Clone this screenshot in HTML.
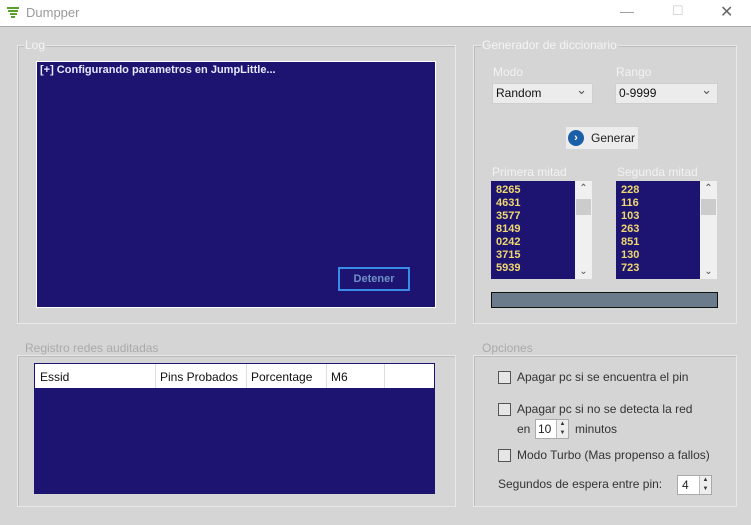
<!DOCTYPE html>
<html><head><style>
body{margin:0;width:751px;height:525px;background:#d5d5d5;font-family:"Liberation Sans",sans-serif;font-size:12px;color:#222;position:relative;overflow:hidden}
.a{position:absolute}
.gb{position:absolute;border:1px solid #e8e8e8;box-shadow:inset 1px 1px 0 #bcbcbc}
.lbl{position:absolute;background:#d5d5d5;color:#f4f4f4;padding:0 1px;font-size:12px}
.navy{background:#1c1470}
.combo{position:absolute;background:#ececec;border:1px solid #cfcfcf;height:19px;line-height:19px;padding-left:3px;font-size:12px;color:#111}
.combo:after{content:"⌄";position:absolute;right:5px;top:-4px;font-size:13px;color:#555}
.lb{position:absolute;background:#1c1470;color:#f0d870;font-weight:bold;font-size:11px;line-height:13px;padding:3px 0 0 5px;box-sizing:border-box}
.sb{position:absolute;background:#f0f0f0;width:17px;color:#555;font-size:10px;text-align:center}
.cb{position:absolute;width:11px;height:11px;border:1px solid #555;background:#e6e6e6}
.ot{position:absolute;color:#333;font-size:12px}
.spin{position:absolute;background:#fff;border:1px solid #aaa;height:18px;font-size:12px;line-height:18px}
.arr{position:absolute;right:0;top:0;width:11px;height:18px;background:#eee;border-left:1px solid #bbb;font-size:6px;line-height:9px;text-align:center;color:#333}
</style></head><body>
<div class="a" style="left:0;top:0;width:751px;height:26px;background:#fff;border-bottom:1px solid #aaa"></div>
<svg class="a" style="left:5px;top:5px" width="16" height="16" viewBox="0 0 16 16"><g stroke="#5aa02c" stroke-width="2" fill="none"><path d="M2 3h12M3 6h10M5 9h7M6 12h4"/></g></svg>
<div class="a" style="left:26px;top:5px;color:#999;font-size:13px">Dumpper</div>
<div class="a" style="left:620px;top:3px;color:#999;font-size:14px">—</div>
<div class="a" style="left:672px;top:3px;color:#ccc;font-size:13px">☐</div>
<div class="a" style="left:720px;top:2px;color:#666;font-size:16px">✕</div>

<div class="gb" style="left:17px;top:45px;width:437px;height:277px"></div>
<div class="lbl" style="left:24px;top:38px">Log</div>
<div class="a navy" style="left:36px;top:61px;width:398px;height:245px;border:1px solid #fff"></div>
<div class="a" style="left:40px;top:64px;color:#e8e8ff;font-weight:bold;font-size:11px">[+] Configurando parametros en JumpLittle...</div>
<div class="a" style="left:338px;top:267px;width:68px;height:20px;border:2px solid #3a8ae8;color:#7090c8;font-size:11px;text-align:center;line-height:20px;font-weight:bold">Detener</div>

<div class="gb" style="left:473px;top:45px;width:262px;height:277px"></div>
<div class="lbl" style="left:481px;top:38px">Generador de diccionario</div>
<div class="ot" style="left:493px;top:65px;color:#f2f2f2">Modo</div>
<div class="ot" style="left:616px;top:65px;color:#f2f2f2">Rango</div>
<div class="combo" style="left:492px;top:83px;width:96px">Random</div>
<div class="combo" style="left:615px;top:83px;width:98px">0-9999</div>
<div class="a" style="left:566px;top:127px;width:72px;height:22px;background:#ececec"></div>
<div class="a" style="left:568px;top:130px;width:16px;height:16px;border-radius:50%;background:#1a5fa8;color:#fff;font-size:11px;text-align:center;line-height:16px;font-weight:bold">›</div>
<div class="a" style="left:591px;top:131px;font-size:12px">Generar</div>
<div class="ot" style="left:492px;top:165px;color:#f2f2f2">Primera mitad</div>
<div class="ot" style="left:617px;top:165px;color:#f2f2f2">Segunda mitad</div>
<div class="lb" style="left:491px;top:181px;width:85px;height:98px">8265<br>4631<br>3577<br>8149<br>0242<br>3715<br>5939</div>
<div class="sb" style="left:575px;top:181px;height:98px"><div style="position:absolute;top:2px;width:17px">⌃</div><div style="position:absolute;left:1px;top:18px;width:15px;height:16px;background:#ccc"></div><div style="position:absolute;bottom:2px;width:17px">⌄</div></div>
<div class="lb" style="left:616px;top:181px;width:84px;height:98px">228<br>116<br>103<br>263<br>851<br>130<br>723</div>
<div class="sb" style="left:700px;top:181px;height:98px"><div style="position:absolute;top:2px;width:17px">⌃</div><div style="position:absolute;left:1px;top:18px;width:15px;height:16px;background:#ccc"></div><div style="position:absolute;bottom:2px;width:17px">⌄</div></div>
<div class="a" style="left:491px;top:292px;width:225px;height:14px;background:#6c7b8b;border:1px solid #111"></div>

<div class="gb" style="left:17px;top:355px;width:437px;height:150px"></div>
<div class="lbl" style="left:24px;top:341px;color:#aaa">Registro redes auditadas</div>
<div class="a navy" style="left:34px;top:363px;width:401px;height:131px"></div>
<div class="a" style="left:35px;top:364px;width:399px;height:24px;background:#fff"></div>
<div class="ot" style="left:40px;top:370px;color:#111">Essid</div>
<div class="a" style="left:155px;top:364px;width:1px;height:24px;background:#ddd"></div>
<div class="ot" style="left:160px;top:370px;color:#111">Pins Probados</div>
<div class="a" style="left:246px;top:364px;width:1px;height:24px;background:#ddd"></div>
<div class="ot" style="left:251px;top:370px;color:#111">Porcentage</div>
<div class="a" style="left:326px;top:364px;width:1px;height:24px;background:#ddd"></div>
<div class="ot" style="left:331px;top:370px;color:#111">M6</div>
<div class="a" style="left:384px;top:364px;width:1px;height:24px;background:#ddd"></div>

<div class="gb" style="left:473px;top:355px;width:262px;height:150px"></div>
<div class="lbl" style="left:481px;top:341px;color:#aaa">Opciones</div>
<div class="cb" style="left:498px;top:371px"></div><div class="ot" style="left:517px;top:370px">Apagar pc si se encuentra el pin</div>
<div class="cb" style="left:498px;top:403px"></div><div class="ot" style="left:517px;top:402px">Apagar pc si no se detecta la red</div>
<div class="ot" style="left:517px;top:422px">en</div>
<div class="spin" style="left:535px;top:419px;width:32px"><span style="padding-left:2px">10</span><div class="arr">▲<br>▼</div></div>
<div class="ot" style="left:575px;top:422px">minutos</div>
<div class="cb" style="left:498px;top:449px"></div><div class="ot" style="left:517px;top:448px">Modo Turbo (Mas propenso a fallos)</div>
<div class="ot" style="left:498px;top:477px">Segundos de espera entre pin:</div>
<div class="spin" style="left:677px;top:475px;width:33px"><span style="padding-left:4px">4</span><div class="arr">▲<br>▼</div></div>
</body></html>
